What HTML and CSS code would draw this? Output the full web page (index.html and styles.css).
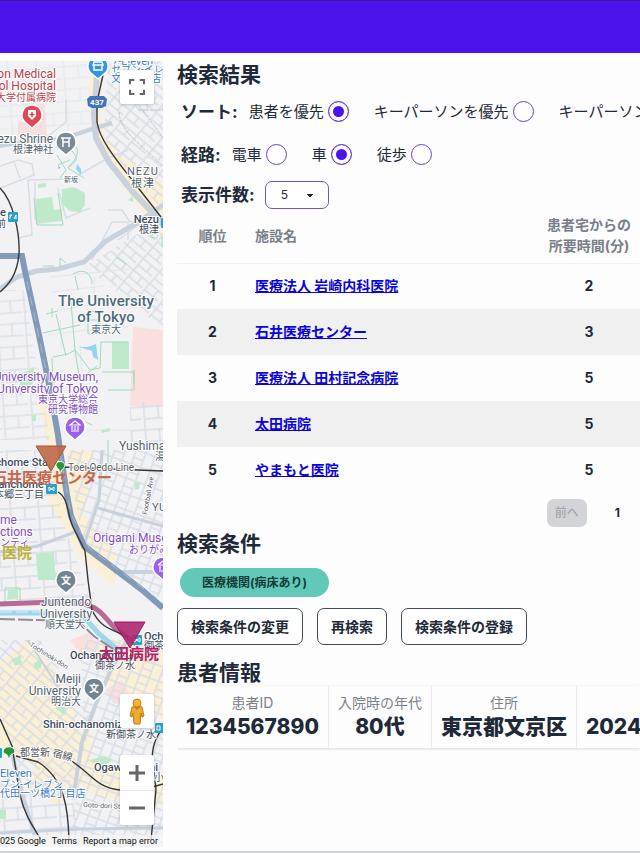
FILE: index.html
```html
<!DOCTYPE html>
<html lang="ja">
<head>
<meta charset="utf-8">
<meta name="viewport" content="width=device-width, initial-scale=1">
<title>検索結果</title>
<link rel="stylesheet" href="styles.css">
</head>
<body>
<header class="topbar"></header>
<div class="layout">
  <section class="map" aria-label="地図">
    <svg class="map-canvas" viewBox="0 61 163 786" preserveAspectRatio="xMinYMin slice" aria-hidden="true">
      <defs>
        <pattern id="blocks" width="21" height="15" patternUnits="userSpaceOnUse" patternTransform="rotate(40)">
          <path d="M0 1H21M3 0V15M14 1V9M3 9H21" class="street"/>
        </pattern>
        <pattern id="blocks-b" width="20" height="15" patternUnits="userSpaceOnUse" patternTransform="rotate(20)">
          <path d="M0 1H20M2 0V15M12 1V15M2 9H12" class="street"/>
        </pattern>
        <pattern id="blocks-c" width="28" height="23" patternUnits="userSpaceOnUse" patternTransform="rotate(-4)">
          <path d="M0 2H28M3 0V23M17 2V14M3 14H28" class="street"/>
        </pattern>
      </defs>
      <rect x="0" y="61" width="163" height="786" fill="#f2f2f5"/>

      <!-- Built-up areas -->
      <g fill="#fbf0d5">
        <path d="M88 61H104L100 115 107 140 132 170 163 202V226L148 210 118 176 95 144 90 110Z"/>
        <path d="M92 134 112 150 140 168 163 182V240L130 196 103 158Z"/>
        <path d="M36 393 50 390 62 450H48Z"/>
        <path d="M47 448H60L69 510 84 545 118 570 113 586 78 556 62 524 48 500Z"/>
        <path d="M66 450H92L84 515 118 555 110 564 78 535 68 500Z"/>
        <path d="M0 662 27 640 60 676 75 710 72 760 40 770 0 746Z"/>
        <path d="M50 730H92L90 780 58 805 25 790Z"/>
        <path d="M96 640H163V720L128 702 108 684Z"/>
        <path d="M73 750 120 765 163 773V806L120 800 78 790Z"/>
      </g>
      <g fill="#fadfdf">
        <path d="M25 104H45L47 137H18V122H25Z"/>
        <path d="M133 327 163 330V406H130Z"/>
        <path d="M105 690 122 680 132 700 114 704Z"/>
        <path d="M70 640 90 632 100 648 82 656Z"/>
      </g>
      <!-- Street grids -->
      <path d="M108 61H163V210L122 164 104 137Z" fill="url(#blocks)"/>
      <path d="M84 267 163 218V330L128 300Z" fill="url(#blocks)"/>
      <path d="M66 450H163V600L118 568 84 545Z" fill="url(#blocks-b)"/>
      <path d="M0 450H48L64 524 90 600H0Z" fill="url(#blocks-c)"/>
      <path d="M0 61H90V125L0 148Z" fill="url(#blocks-c)" opacity=".4"/>
      <path d="M0 290H24L50 440H0Z" fill="url(#blocks-c)" opacity=".85"/>
      <path d="M0 640H40L92 720 72 795 20 780 0 720Z" fill="url(#blocks)"/>
      <path d="M80 640H163V847H70L84 720Z" fill="url(#blocks-b)"/>
      <path d="M0 780H70L80 847H0Z" fill="url(#blocks-c)"/>
      <path d="M130 402H163V450H130Z" fill="url(#blocks-c)"/>
      <path class="street" d="M0 166 18 160 32 164 34 175 0 188M14 162 20 178M28 180 32 235 18 238M28 180 70 179M70 180 108 158 128 150M66 122V100M66 122 47 137M35 182V220M108 210H122L130 222 163 216M112 222H128V240M118 240 148 218M112 222 92 260M58 188 66 218 90 208"/>
      <path class="lane" d="M50 277 130 269M52 292 104 286M58 310 96 304M60 320 62 350M94 277V300M48 335 125 325M80 345 85 420M30 395H58M72 430H130"/>

      <!-- Parks, gardens and water -->
      <g fill="#bfe9cb">
        <path d="M36 199 52 197 54 210 62 209V221L36 224Z"/>
        <path d="M62 189 74 187 85 193V205L80 212 70 211 62 204Z"/>
        <path d="M38 184 46 183V187L38 188Z"/>
        <path d="M112 342H129V369H112Z"/>
        <path d="M36 554 54 552 55 571 60 580 38 580Z"/>
        <path d="M8 590 18 588V598L7 600Z"/>
        <path d="M12 660 20 655 22 663 15 666ZM34 663 42 659 41 668 35 669Z"/>
        <path d="M90 760 104 756 113 760 102 767ZM0 810H6V819H0Z"/>
        <path d="M135 483 140 482 139 489 135 490ZM55 708 66 705 65 715ZM128 200 133 196 133 202ZM101 430 110 428V431L102 433ZM20 375 34 367 34 382 20 396ZM32 415H36V421H32Z"/>
      </g>
      <g fill="none" stroke="#9fdbb9" stroke-width="1">
        <path d="M57 155 66 170 60 178M66 155C60 150 68 145 73 152S78 160 68 168M75 145C82 155 72 162 68 168L84 178M58 165 70 160M46 314 58 311M52 308V317M56 314 66 356M71 302 75 350 82 395M43 333 80 325M53 357 68 354 75 350M75 350 90 370 100 368 101 342H128M102 372H134V390H108M85 375 97 366M134 370V384M52 358 53 385M86 422 92 425M73 274C85 267 92 275 92 284M75 276 78 290M43 266H54M60 267V258L66 263M116 257 126 264M108 440V470"/>
        <path d="M34 198 37 225H63L58 193M88 320H98V334H88ZM90 310 101 315 96 328" />
        <path d="M5 588H20V602H5ZM152 235C160 232 160 242 150 236M162 237V247"/>
      </g>
      <path d="M79 347H88L96 344 98 360 93 357 92 351Z M77 164 81 169 81 175 76 169Z M58 165 61 168 58 169Z" fill="#93d5f0"/>

      <!-- Arterial roads -->
      <g fill="none" stroke="#c8d1dc">
        <path d="M0 146 30 141 62 139 92 129 112 123" stroke-width="4"/>
        <path d="M97 76 94 115 96 138 109 162 133 192 163 224" stroke-width="6"/>
        <path d="M163 205 137 223 106 241 84 262 58 269 36 271 17 277 0 289" stroke-width="5"/>
        <path d="M102 450 99 500 84 545" stroke-width="3"/>
        <path d="M98 508 130 517 163 526" stroke-width="3"/>
        <path d="M0 552 38 546 75 532" stroke-width="3"/>
        <path d="M114 572 163 572" stroke-width="4"/>
        <path d="M127 640 110 672 95 706 82 742 74 793" stroke-width="4"/>
        <path d="M12 755 24 800 35 836" stroke-width="4"/>
        <path d="M0 833 80 829 163 828" stroke-width="3"/>
        <path d="M28 640 60 690 75 700" stroke-width="2"/>
      </g>
      <path d="M138 110H163M116 72 132 96 150 120 163 138M119 112C120 130 135 140 163 166" fill="none" stroke="#bfc3c9" stroke-width="1" stroke-dasharray="3 1"/>

      <!-- River and expressways -->
      <path d="M0 613H52L84 617 98 633 130 660" fill="none" stroke="#99d8ef" stroke-width="5"/>
      <path d="M0 612H80" fill="none" stroke="#e5edf5" stroke-width="1" stroke-dasharray="12 4"/>
      <path d="M0 619 35 620 78 621 95 637 118 652" fill="none" stroke="#8c8f94" stroke-width="2" stroke-dasharray="15 3"/>
      <path d="M0 256H22L25 271 39 335 49 384 58 435 60 450 67 495 71 516 84 546 116 570 141 589 163 608" fill="none" stroke="#8299b8" stroke-width="6"/>
      <path d="M27 281 53 403M60 453 71 514 89 548 163 603" fill="none" stroke="#adbace" stroke-width="1" stroke-dasharray="9 7"/>
      <path d="M0 604 55 602 82 604C104 607 107 624 119 631L136 644" fill="none" stroke="#b86a94" stroke-width="5"/>

      <!-- Railways -->
      <g fill="none" stroke="#343638" stroke-width="1.4">
        <path d="M103 75 97 102 97 122C100 142 120 164 136 185L161 217"/>
        <path d="M0 188C13 201 20 232 19 254C17 276 8 285 0 292"/>
        <path d="M58 492C69 498 67 515 73 527L85 551 88 580 92 610C101 629 112 629 128 637"/>
        <path d="M62 467 163 471"/>
        <path d="M0 719 12 746 20 795C25 817 35 829 41 840"/>
        <path d="M16 756 38 762C66 780 68 811 69 839M70 760C91 773 96 788 120 790H142L163 784"/>
        <path d="M163 728C145 750 155 770 156 790L151 840"/>
      </g>

      <!-- Place names -->
      <g class="label clinic">
        <text x="56" y="78" text-anchor="end">on Medical</text>
        <text x="56" y="90" text-anchor="end">ol Hospital</text>
        <text x="56" y="101" text-anchor="end" class="jp">大学付属病院</text>
      </g>
      <g class="label shop">
        <text x="112" y="65">7-Eleven</text>
        <text x="111" y="73" class="jp">セブン-イレブン</text>
        <text x="111" y="82" class="jp">文京根津店</text>
        <text x="0" y="777">Eleven</text>
        <text x="0" y="788" class="jp">ブン-イレブン</text>
        <text x="0" y="797" class="jp">代田一ツ橋2丁目店</text>
      </g>
      <g class="label place">
        <text x="53" y="143" text-anchor="end">ezu Shrine</text>
        <text x="53" y="153" text-anchor="end" class="jp">根津神社</text>
        <text x="64" y="182" class="minor">新坂</text>
        <text x="127" y="175" class="district">NEZU</text>
        <text x="131" y="187" class="district">根津</text>
        <text x="119" y="450">Yushima</text>
        <text x="155" y="460" class="jp">湯</text>
        <text x="152" y="511" class="district">YU</text>
        <text x="66" y="606" text-anchor="middle">Juntendo</text>
        <text x="66" y="618" text-anchor="middle">University</text>
        <text x="65" y="628" text-anchor="middle" class="jp">順天堂大</text>
        <text x="81" y="683" text-anchor="end">Meiji</text>
        <text x="81" y="695" text-anchor="end">University</text>
        <text x="81" y="705" text-anchor="end" class="jp">明治大</text>
      </g>
      <g class="label campus">
        <text x="106" y="306" text-anchor="middle">The University</text>
        <text x="106" y="322" text-anchor="middle">of Tokyo</text>
        <text x="106" y="333" text-anchor="middle" class="jp">東京大</text>
      </g>
      <g class="label museum">
        <text x="98" y="381" text-anchor="end">University Museum,</text>
        <text x="98" y="393" text-anchor="end">University of Tokyo</text>
        <text x="98" y="403" text-anchor="end" class="jp">東京大学総合</text>
        <text x="98" y="413" text-anchor="end" class="jp">研究博物館</text>
        <text x="0" y="524">me</text>
        <text x="0" y="536">ctions</text>
        <text x="0" y="546" class="jp">ンティ</text>
        <text x="93" y="542">Origami Museum</text>
        <text x="129" y="553" class="jp">おりがみ</text>
      </g>
      <g class="label station">
        <text x="0" y="216">e</text><text x="-4" y="227" class="jp">前</text>
        <text x="159" y="223" text-anchor="end">Nezu</text>
        <text x="159" y="233" text-anchor="end" class="jp">根津</text>
        <text x="51" y="466" text-anchor="end">-chome Sta.</text>
        <text x="44" y="488" text-anchor="end">anchome</text>
        <text x="44" y="498" text-anchor="end" class="jp">本郷三丁目</text>
        <text x="144" y="640">Ocha</text><text x="144" y="649" class="jp">御茶</text>
        <text x="70" y="659">Ochanomizu</text>
        <text x="95" y="669" class="jp">御茶ノ水</text>
        <text x="43" y="728">Shin-ochanomizu</text>
        <text x="106" y="738" class="jp">新御茶ノ水</text>
        <text x="94" y="771">Ogawamachi</text>
        <text x="154" y="781" class="jp">小川</text>
      </g>
      <g class="label road">
        <text x="68" y="471">Toei Oedo Line</text>
        <text x="20" y="756">都営新</text>
        <text x="52" y="756" transform="rotate(14 52 756)">宿線</text>
        <text x="29" y="646" class="minor" transform="rotate(32 29 646)">Tochinoki-dori</text>
        <text x="147" y="515" class="minor" transform="rotate(-80 147 515)">Football Ave</text>
        <text x="83" y="807" class="minor" transform="rotate(3 83 807)">Goto-dori St</text>
      </g>

      <!-- Map pins -->
      <g stroke="#fff" stroke-width="1.5">
        <path d="M98 56a10 10 0 0 1 6 18l-6 5-6-5a10 10 0 0 1 6-18Z" fill="#3594ea"/>
        <path d="M32 105a10 10 0 0 1 6 18l-6 5-6-5a10 10 0 0 1 6-18Z" fill="#df4a57"/>
        <path d="M66 132a10 10 0 0 1 6 18l-6 5-6-5a10 10 0 0 1 6-18Z" fill="#7a8b97"/>
        <path d="M75 417a10 10 0 0 1 6 18l-6 5-6-5a10 10 0 0 1 6-18Z" fill="#9d60ea"/>
        <path d="M163 557a10 10 0 0 1 6 18l-6 5-6-5a10 10 0 0 1 6-18Z" fill="#9d60ea"/>
        <path d="M66 570a10 10 0 0 1 6 18l-6 5-6-5a10 10 0 0 1 6-18Z" fill="#72858f"/>
        <path d="M94 678a10 10 0 0 1 6 18l-6 5-6-5a10 10 0 0 1 6-18Z" fill="#72858f"/>
      </g>
      <path d="M94 62H102L103 65H93ZM94 66V70H102V66" fill="none" stroke="#fff" stroke-width="1.5"/>
      <path d="M28 110H36V116L32 120 28 116Z" fill="#fff"/><path d="M32 112V117M29.500 114.500H34.500" stroke="#df4a57" stroke-width="1.500"/>
      <path d="M61 138H71M63 142H69M63 138V147M69 138V147" fill="none" stroke="#fff" stroke-width="1.500"/>
      <g fill="none" stroke="#fff" stroke-width="1.200">
        <path d="M70 425 75 421 80 425ZM71 431H79M72 426V430M75 426V430M78 426V430"/>
        <path d="M158 565 163 561M158 565H163M159 571H163M160 566V570"/>
      </g>
      <g class="pin-text" text-anchor="middle"><text x="66" y="584">文</text><text x="94" y="692">文</text></g>
      <path d="M90 96H104L107 99 106 106 102 108H92L88 106 87 99Z" fill="#4674b9"/>
      <text x="97" y="105" text-anchor="middle" class="shield">437</text>
      <g fill="#2f9fca">
        <rect x="8" y="212" width="10" height="10" rx="1"/><rect x="161" y="218" width="9" height="10" rx="1"/>
        <rect x="46" y="484" width="11" height="10" rx="1"/><rect x="132" y="635" width="10" height="10" rx="1"/>
        <rect x="155" y="723" width="9" height="10" rx="1"/><rect x="-6" y="748" width="8" height="10" rx="1"/>
      </g>
      <path d="M10 219V215H12L10 217M14 219 16 215V219M49 491V487L54 491V487L49 491M134 642V638L140 642V638ZM157 730V726H160V730Z" fill="none" stroke="#fff" stroke-width="1"/>
      <g fill="#28983d" stroke="#fff"><path d="M56 466C55 460 65 460 65 466C64 469 61 469 61 472H59C60 469 57 469 56 466Z"/><path d="M3 752C3 745 15 745 15 752C13 755 10 753 10 758H8C8 753 5 755 3 752Z"/></g>

      <!-- Search result markers -->
      <path d="M36 446H66L51 471Z" fill="#bd6946" fill-opacity=".9" stroke="#ae5234"/>
      <path d="M114 622H145L130 648Z" fill="#ad286f" fill-opacity=".9" stroke="#a51762"/>
      <g class="marker">
        <text x="52" y="483" text-anchor="middle" fill="#c5674a">石井医療センター</text>
        <text x="32" y="558" text-anchor="end" fill="#beb338">医院</text>
        <text x="129" y="659" text-anchor="middle" fill="#b52167">太田病院</text>
      </g>
    </svg>

    <button class="map-btn fullscreen" type="button" aria-label="全画面表示">
      <svg viewBox="0 0 18 18" width="16" height="16"><path d="M1 6V1H6M12 1H17V6M17 12V17H12M6 17H1V12" fill="none" stroke="#666" stroke-width="2.500"/></svg>
    </button>
    <button class="map-btn pegman" type="button" aria-label="ストリートビュー">
      <svg viewBox="0 0 16 27" width="16" height="27"><path d="M3 9Q8 7 13 9L15 18 13 19 12 15 11 26H5L4 15 3 19 1 18Z" fill="#efab2d" stroke="#b87b22"/><circle cx="8" cy="5" r="4" fill="#f7b62f" stroke="#c2832a"/><path d="M5 9 8 12 11 9Z" fill="#e46b2d"/></svg>
    </button>
    <div class="zoom">
      <button type="button" aria-label="ズームイン"><svg viewBox="0 0 16 16" width="16" height="16"><path d="M8 0V16M0 8H16" stroke="#666" stroke-width="3"/></svg></button>
      <button type="button" aria-label="ズームアウト"><svg viewBox="0 0 16 16" width="16" height="16"><path d="M0 8H16" stroke="#666" stroke-width="3"/></svg></button>
    </div>
    <div class="attribution"><span>025 Google</span><a href="#">Terms</a><a href="#">Report a map error</a></div>
  </section>

  <main class="panel">
    <h2>検索結果</h2>
    <fieldset class="options">
      <legend>ソート:</legend>
      <label>患者を優先<input type="radio" name="sort" checked></label>
      <label>キーパーソンを優先<input type="radio" name="sort"></label>
      <label>キーパーソン<input type="radio" name="sort"></label>
    </fieldset>
    <fieldset class="options">
      <legend>経路:</legend>
      <label>電車<input type="radio" name="route"></label>
      <label>車<input type="radio" name="route" checked></label>
      <label>徒歩<input type="radio" name="route"></label>
    </fieldset>
    <div class="count">
      <label for="count">表示件数:</label>
      <select id="count"><option>5</option></select>
    </div>

    <table class="results">
      <thead><tr><th class="rank">順位</th><th class="name">施設名</th><th class="time">患者宅からの<br>所要時間(分)</th></tr></thead>
      <tbody>
        <tr><td class="rank">1</td><td class="name"><a href="#">医療法人 岩崎内科医院</a></td><td class="time">2</td></tr>
        <tr><td class="rank">2</td><td class="name"><a href="#">石井医療センター</a></td><td class="time">3</td></tr>
        <tr><td class="rank">3</td><td class="name"><a href="#">医療法人 田村記念病院</a></td><td class="time">5</td></tr>
        <tr><td class="rank">4</td><td class="name"><a href="#">太田病院</a></td><td class="time">5</td></tr>
        <tr><td class="rank">5</td><td class="name"><a href="#">やまもと医院</a></td><td class="time">5</td></tr>
      </tbody>
    </table>
    <nav class="pager"><button type="button" disabled>前へ</button><span>1</span></nav>

    <h2>検索条件</h2>
    <span class="badge">医療機関(病床あり)</span>
    <div class="actions">
      <button type="button">検索条件の変更</button>
      <button type="button">再検索</button>
      <button type="button">検索条件の登録</button>
    </div>

    <h2>患者情報</h2>
    <dl class="stats">
      <div><dt>患者ID</dt><dd>1234567890</dd></div>
      <div><dt>入院時の年代</dt><dd>80代</dd></div>
      <div><dt>住所</dt><dd>東京都文京区</dd></div>
      <div><dd>2024</dd></div>
    </dl>
  </main>
</div>
</body>
</html>
```
FILE: styles.css
```css
* { box-sizing: border-box; }

body {
  margin: 0;
  min-height: 100vh;
  display: flex;
  flex-direction: column;
  overflow-x: hidden;
  background: #fdfdfe;
  border-bottom: 2px solid #d2d3d5;
  color: #1f2937;
  font: 15px/24px Inter, "Noto Sans CJK JP", sans-serif;
}

button, select { font: inherit; color: inherit; }

.topbar {
  height: 53px;
  background: #4b12ec;
  border-top: 1px solid #3c16a6;
}

.layout {
  flex: 1;
  display: grid;
  grid-template-columns: 163fr 463fr;
  gap: 14px;
  padding: 8px 0 4px;
}

/* Map */
.map { position: relative; min-width: 0; overflow: hidden; background: #f2f2f5; }
.map-canvas { position: absolute; inset: 0; width: 100%; height: 100%; }
.map-canvas text { font-family: Roboto, "Noto Sans CJK JP", sans-serif; }
.street { fill: none; stroke: #d8dde5; stroke-width: 1.5; }
.lane { fill: none; stroke: #e4e6ea; stroke-width: 1; }
.label { paint-order: stroke; stroke: #fff; stroke-width: 2px; stroke-linejoin: round; font-size: 12px; }
.label .jp { font-size: 10px; font-weight: 400; }
.label .minor { font-size: 7px; }
.clinic { fill: #b9404b; }
.shop { fill: #3c7ac0; font-size: 11px; }
.place { fill: #52616d; }
.campus { fill: #4b6b78; font-size: 15px; font-weight: 500; }
.museum { fill: #814cbd; }
.station { fill: #3d4b5c; font-size: 11px; font-weight: 500; }
.road { fill: #555b62; font-size: 10px; }
.district { font-size: 11px; letter-spacing: 1px; }
.shield { fill: #fff; font-size: 8px; font-weight: 700; }
.pin-text { fill: #fff; font-size: 10px; font-weight: 700; }
.marker { font-size: 15px; font-weight: 700; }

.map-btn, .zoom {
  position: absolute;
  right: 9px;
  width: 34px;
  background: #fff;
  border: 0;
  border-radius: 2px;
  box-shadow: 0 1px 3px rgba(0, 0, 0, .2);
}
.map-btn { height: 34px; display: grid; place-items: center; padding: 0; }
.fullscreen { top: 9px; }
.pegman { bottom: 119px; }
.zoom { bottom: 22px; }
.zoom button {
  display: grid;
  place-items: center;
  width: 100%;
  height: 35px;
  padding: 0;
  border: 0;
  background: none;
}
.zoom button + button { border-top: 1px solid #e6e6e6; }
.attribution {
  position: absolute;
  inset: auto 0 0 0;
  display: flex;
  justify-content: space-between;
  padding-right: 5px;
  background: rgba(245, 245, 245, .8);
  color: #111;
  font: 9px/12px Roboto, sans-serif;
  white-space: nowrap;
}
.attribution a { color: inherit; text-decoration: none; }

/* Results panel */
.panel { min-width: 0; overflow: hidden; }
h2 { margin: 0; font-size: 21px; line-height: 28px; font-weight: 700; }

.options {
  display: flex;
  align-items: center;
  gap: 25px;
  height: 43px;
  margin: 0;
  padding: 0 0 0 4px;
  border: 0;
  white-space: nowrap;
}
.options:first-of-type { margin-top: 1px; }
.options legend { float: left; margin-right: -14px; padding: 0; }
.options legend, .count label { font-size: 17px; font-weight: 700; }
.options label { display: flex; align-items: center; gap: 4px; }

input[type="radio"] {
  appearance: none;
  width: 21px;
  height: 21px;
  margin: 0;
  border: 1px solid #6a3fd0;
  border-radius: 50%;
  background: #fff;
}
input[type="radio"]:checked { background: #4b12ec; box-shadow: inset 0 0 0 4px #fff; }

.count { display: flex; align-items: center; gap: 10px; height: 37px; padding-left: 4px; }
select {
  appearance: none;
  width: 64px;
  height: 28px;
  padding: 0 15px;
  border: 1px solid #7650c8;
  border-radius: 7px;
  font-size: 12px;
  background: conic-gradient(from -45deg at 50% 100%, #1f2937 90deg, transparent 0) 41px 12px / 7px 4px no-repeat, #fff;
  background: linear-gradient(135deg, #1f2937 50%, transparent 50%) 44px 12px / 4px 4px no-repeat,
    linear-gradient(225deg, #1f2937 50%, transparent 50%) 40px 12px / 4px 4px no-repeat, #fff;
}

.results {
  width: 100%;
  table-layout: fixed;
  border-collapse: collapse;
  font-size: 14px;
  font-weight: 700;
}
.results th { height: 50px; padding: 0 0 5px; color: #7a7f87; line-height: 21px; font-weight: 700; }
.results td { height: 46px; padding: 0; }
.results thead { border-bottom: 1px solid #f2f2f3; }
.results tbody tr:nth-child(even) { background: #f0f0f0; }
.results .rank { width: 71px; text-align: center; }
.results .name { padding-left: 7px; text-align: left; }
.results .time { width: 102px; text-align: center; }
.results a { color: #0b05dc; }

.pager { display: flex; justify-content: flex-end; align-items: center; gap: 28px; margin: 6px 0 3px; padding-right: 20px; font-size: 12px; font-weight: 700; }
.pager button { height: 28px; padding: 0 8px; border: 0; border-radius: 7px; background: #d3d4d8; color: #a4a6ad; font-weight: 500; }

.badge {
  display: inline-block;
  margin: 10px 0 11px 3px;
  padding: 0 22px;
  border-radius: 15px;
  background: #62c8b8;
  color: #153c38;
  font-size: 12px;
  line-height: 29px;
  font-weight: 700;
  vertical-align: top;
}
.actions { display: flex; gap: 14px; margin-bottom: 14px; }
.actions button {
  height: 37px;
  padding: 0 13px;
  border: 1px solid #444b56;
  border-radius: 7px;
  background: #fff;
  font-size: 14px;
  font-weight: 700;
  white-space: nowrap;
}

.stats { display: flex; margin: -1px 0 4px; box-shadow: 0 1px 3px rgba(0, 0, 0, .14); }
.stats div {
  display: flex;
  flex-direction: column;
  justify-content: flex-end;
  flex: none;
  padding: 7px 9px;
  text-align: center;
  white-space: nowrap;
}
.stats div + div { border-left: 1px solid #e9e9eb; }
.stats dt { color: #7d8188; font-size: 14px; line-height: 20px; }
.stats dd { margin: 0; font-size: 21px; line-height: 28px; font-weight: 800; }
```
